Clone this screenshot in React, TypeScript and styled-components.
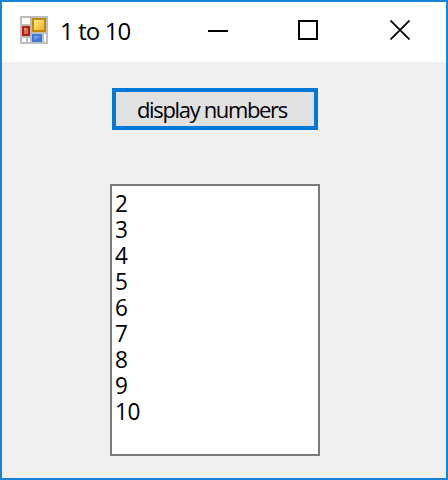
import React from 'react';
import styled, { createGlobalStyle } from 'styled-components';

const GlobalStyle = createGlobalStyle`
  * { box-sizing: border-box; }
  body { margin: 0; }
`;

const Window = styled.div`
  width: 448px;
  height: 480px;
  display: flex;
  flex-direction: column;
  border: 2px solid #1883d7;
  background: #f0f0f0;
  color: #000;
  font-family: 'Open Sans', 'Noto Sans', sans-serif;
  overflow: hidden;
`;

const TitleBar = styled.header`
  height: 60px;
  flex: none;
  display: flex;
  align-items: flex-start;
  padding-left: 18px;
  background: #fff;
`;

const AppIcon = styled.svg`
  width: 28px;
  height: 28px;
  margin-top: 14px;
  flex: none;
`;

const Title = styled.h1`
  flex: 1;
  margin: 13px 0 0 12px;
  font-size: 24px;
  line-height: 32px;
  font-weight: 400;
  letter-spacing: -0.9px;
  white-space: nowrap;
`;

const Controls = styled.div`
  display: flex;
  height: 56px;
`;

const ControlButton = styled.button<{ $width: number; $end?: number }>`
  display: flex;
  justify-content: flex-end;
  width: ${(p) => p.$width}px;
  padding: 18px ${(p) => p.$end ?? 0}px 0 0;
  border: 0;
  background: transparent;

  svg {
    width: 20px;
    height: 20px;
    flex: none;
  }
`;

const Content = styled.main`
  flex: 1;
  display: flex;
  flex-direction: column;
  align-items: flex-start;
  padding: 26px 0 0 108px;
  gap: 54px;
`;

const DisplayButton = styled.button`
  width: 206px;
  height: 42px;
  margin-left: 2px;
  padding: 0 0 0 21px;
  border: 4px solid #0078d7;
  background: #e1e1e1;
  color: #000;
  font-family: 'Open Sans', 'Noto Sans', sans-serif;
  font-size: 22px;
  line-height: 32px;
  letter-spacing: -1.35px;
  text-align: left;
  white-space: nowrap;
`;

const ListBox = styled.ul`
  width: 210px;
  height: 272px;
  margin: 0;
  padding: 4px 3px;
  border: 2px solid #7a7a7a;
  background: #fff;
  list-style: none;
`;

const ListItem = styled.li`
  height: 26px;
  font-size: 24px;
  line-height: 26px;
  letter-spacing: -0.5px;
  transform: scaleX(0.94);
  transform-origin: left;
`;

const numbers = [2, 3, 4, 5, 6, 7, 8, 9, 10];

const FormIcon = () => (
  <AppIcon viewBox="0 0 14 14" shapeRendering="crispEdges" aria-hidden="true">
    <defs>
      <linearGradient id="gold" x2="1" y2="1">
        <stop stopColor="#ffe98a" />
        <stop offset="1" stopColor="#f0b41c" />
      </linearGradient>
      <linearGradient id="blue" x2="1" y2="1">
        <stop stopColor="#8db8f8" />
        <stop offset="1" stopColor="#2f68cf" />
      </linearGradient>
    </defs>
    <path fill="#bdbdbd" d="M0 0h14v14H0z" />
    <path fill="#fff" d="M1 1h4v3H1zM1 11h2v2H1zM4 11h1v2H4zM12 9h1v4h-1z" />
    <path fill="#b51d10" d="M1 5h4v5H1z" />
    <path fill="#e06a58" d="M2 6h2v3H2z" />
    <path fill="#f0a398" d="M2 6h1v1H2z" />
    <path fill="#bd8a0b" d="M6 1h7v7H6z" />
    <path fill="url(#gold)" d="M7 2h5v5H7z" />
    <path fill="#3d78d8" d="M6 9h5v4H6z" />
    <path fill="url(#blue)" d="M7 10h3v2H7z" />
  </AppIcon>
);

export default function App() {
  return (
    <>
      <GlobalStyle />
      <Window>
        <TitleBar>
          <FormIcon />
          <Title>1 to 10</Title>
          <Controls>
            <ControlButton $width={90} aria-label="Minimize">
              <svg viewBox="0 0 20 20"><path d="M0 10h20v2H0z" /></svg>
            </ControlButton>
            <ControlButton $width={90} aria-label="Maximize">
              <svg viewBox="0 0 20 20"><path d="M1 1h18v18H1z" fill="none" stroke="#000" strokeWidth="2" /></svg>
            </ControlButton>
            <ControlButton $width={128} $end={36} aria-label="Close">
              <svg viewBox="0 0 20 20"><path d="M0.5 0.5l19 19M19.5 0.5l-19 19" fill="none" stroke="#000" strokeWidth="1.7" /></svg>
            </ControlButton>
          </Controls>
        </TitleBar>
        <Content>
          <DisplayButton>display numbers</DisplayButton>
          <ListBox>
            {numbers.map((n) => <ListItem key={n}>{n}</ListItem>)}
          </ListBox>
        </Content>
      </Window>
    </>
  );
}
